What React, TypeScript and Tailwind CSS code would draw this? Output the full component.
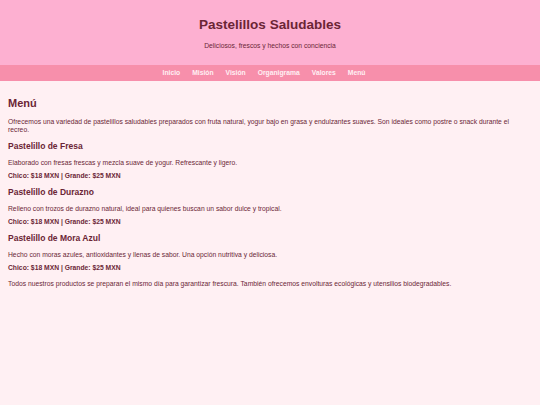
import React from "react";

const NAV = ["Inicio", "Misión", "Visión", "Organigrama", "Valores", "Menú"];

const ITEMS = [
  {
    name: "Pastelillo de Fresa",
    desc: "Elaborado con fresas frescas y mezcla suave de yogur. Refrescante y ligero.",
  },
  {
    name: "Pastelillo de Durazno",
    desc: "Relleno con trozos de durazno natural, ideal para quienes buscan un sabor dulce y tropical.",
  },
  {
    name: "Pastelillo de Mora Azul",
    desc: "Hecho con moras azules, antioxidantes y llenas de sabor. Una opción nutritiva y deliciosa.",
  },
];

export default function App() {
  return (
    <div
      className="min-h-[405px] w-[540px] bg-[#fff0f3] text-[#6b2737]"
      style={{ fontFamily: '"Liberation Sans", Arial, sans-serif' }}
    >
      {/* Header */}
      <header className="h-[65px] bg-[#fdb0d1] flex flex-col items-center pt-[17px]">
        <h1 className="text-[13.5px] leading-[16px] font-bold text-[#6b2535]">Pastelillos Saludables</h1>
        <p className="mt-[9px] text-[6.75px] leading-[8px] text-[#6b2737]">
          Deliciosos, frescos y hechos con conciencia
        </p>
      </header>

      {/* Nav */}
      <nav className="h-[16px] bg-[#f78fab] flex items-center justify-center gap-[12px] pr-[12px]">
        {NAV.map((n) => (
          <span key={n} className="text-[6.75px] font-bold text-[#fff0f4]">
            {n}
          </span>
        ))}
      </nav>

      {/* Content */}
      <main className="pl-[8px] pr-[12px] pt-[16px] pb-[20px]">
        <h2 className="text-[11px] leading-[13px] font-bold text-[#6b2535]">Menú</h2>
        <p className="mt-[8px] text-[6.75px] leading-[8px]">
          Ofrecemos una variedad de pastelillos saludables preparados con fruta natural, yogur bajo en grasa y
          endulzantes suaves. Son ideales como postre o snack durante el recreo.
        </p>

        {ITEMS.map((item) => (
          <section key={item.name}>
            <h3 className="mt-[7px] text-[8.5px] leading-[10px] font-bold text-[#6b2535]">{item.name}</h3>
            <p className="mt-[8px] text-[6.75px] leading-[8px]">{item.desc}</p>
            <p className="mt-[5px] text-[6.75px] leading-[8px] font-bold">Chico: $18 MXN | Grande: $25 MXN</p>
          </section>
        ))}

        <p className="mt-[8px] text-[6.75px] leading-[8px]">
          Todos nuestros productos se preparan el mismo día para garantizar frescura. También ofrecemos envolturas
          ecológicas y utensilios biodegradables.
        </p>
      </main>
    </div>
  );
}
